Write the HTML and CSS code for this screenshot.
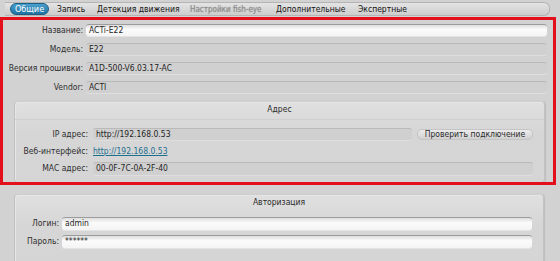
FILE: index.html
```html
<!DOCTYPE html>
<html lang="ru">
<head>
<meta charset="utf-8">
<title>Общие</title>
<link rel="stylesheet" href="styles.css">
</head>
<body>
<nav class="tabs">
  <div class="tab active">Общие</div>
  <div class="tab t-rec">Запись</div>
  <div class="tab t-motion">Детекция движения</div>
  <div class="tab t-fish disabled">Настройки fish-eye</div>
  <div class="tab t-adv">Дополнительные</div>
  <div class="tab t-exp">Экспертные</div>
</nav>
<section class="highlight">
  <div class="rows">
    <label class="lbl">Название:</label><div class="input">ACTi-E22</div>
    <label class="lbl">Модель:</label><div class="field">E22</div>
    <label class="lbl">Версия прошивки:</label><div class="field">A1D-500-V6.03.17-AC</div>
    <label class="lbl">Vendor:</label><div class="field">ACTI</div>
  </div>
  <div class="group addr">
    <div class="group-title">Адрес</div>
    <div class="addr-rows">
      <label class="lbl">IP адрес:</label>
      <div class="ip-line"><div class="field ip">http://192.168.0.53</div><button class="btn">Проверить подключение</button></div>
      <label class="lbl">Веб-интерфейс:</label><div class="link-cell"><a class="link" href="#">http://192.168.0.53</a></div>
      <label class="lbl">MAC адрес:</label><div class="field">00-0F-7C-0A-2F-40</div>
    </div>
  </div>
</section>
<section class="group auth">
  <div class="group-title">Авторизация</div>
  <div class="auth-rows">
    <label class="lbl">Логин:</label><div class="input">admin</div>
    <label class="lbl">Пароль:</label><div class="input pw">******</div>
  </div>
</section>
</body>
</html>
```
FILE: styles.css
```css
html, body {
  margin: 0;
  padding: 0;
}
body {
  width: 560px;
  height: 261px;
  overflow: hidden;
  background: #d2d2d2;
  font-family: "DejaVu Sans Condensed", "DejaVu Sans", sans-serif;
  font-size: 8.5px;
  color: #2a2a2a;
}
.tabs {
  display: flex;
  align-items: center;
  height: 12px;
  margin: 2px 10px 0 5px;
  padding-left: 5px;
  background: linear-gradient(#e4e4e4, #cdcdcd);
  border: 1px solid #b4b4b4;
  border-left: none;
  border-radius: 0 6px 6px 0;
}
.tab {
  flex: none;
  line-height: 11px;
  font-size: 8.5px;
  color: #141414;
  white-space: nowrap;
}
.tab.active {
  box-sizing: border-box;
  flex-basis: 39px;
  text-align: center;
  background: linear-gradient(#4aa0cc, #1f73a3);
  border: 1px solid #1b5e86;
  border-radius: 6px;
  color: #fff;
  line-height: 10px;
  font-size: 9px;
}
.t-rec { margin-left: 8px; flex-basis: 40px; }
.t-motion { flex-basis: 93px; }
.t-fish { flex-basis: 86px; }
.t-adv { flex-basis: 82px; }
.t-exp { flex-basis: 60px; }
.tab.disabled {
  color: #8e8e8e;
  text-shadow: 0 0 1px #9a9a9a;
  font-size: 8px;
}
.highlight {
  margin: 1px 4px 0 0;
  border: 3px solid #e3101b;
  height: 162px;
  overflow: hidden;
}
.rows {
  display: grid;
  grid-template-columns: 80px 1fr;
  grid-auto-rows: 19px;
  column-gap: 3px;
  padding-right: 6px;
  align-items: center;
}
.lbl {
  text-align: right;
  color: #2e2e2e;
  white-space: nowrap;
}
.input, .field {
  height: 12px;
  padding-left: 3px;
  border-radius: 3px;
  box-sizing: border-box;
  white-space: nowrap;
  color: #1f1f1f;
  line-height: 11px;
}
.input {
  background: linear-gradient(#dedede, #fbfbfb 40%, #f4f4f4);
  border-top: 1px solid #9c9c9c;
  box-shadow: 0 1px 0 #e4e4e4;
}
.field {
  background: #d0d0d0;
  border-top: 1px solid #b9b9b9;
  box-shadow: 0 1px 0 #dedede;
}
.group {
  background: linear-gradient(#e0e0e0, #d6d6d6 30px, #d5d5d5);
  border: 1px solid #c2c2c2;
  border-top-color: #cfcfcf;
  border-radius: 4px;
  box-shadow: 1px 1px 0 #e6e6e6 inset, 1px 0 1px #bdbdbd;
}
.addr {
  margin: 5px 8px 0 11px;
  height: 80px;
}
.group-title {
  text-align: center;
  height: 17px;
  line-height: 15px;
  color: #2a2a2a;
  border-bottom: 1px solid #d0d0d0;
}
.addr-rows {
  display: grid;
  grid-template-columns: 73px 1fr;
  grid-auto-rows: 17px;
  column-gap: 5px;
  padding: 5px 11px 0 0;
  align-items: center;
}
.ip-line {
  display: flex;
  align-items: center;
  gap: 5px;
}
.ip { flex: 1; }
.btn {
  width: 116px;
  height: 11px;
  padding: 0;
  font-family: inherit;
  font-size: 8.5px;
  line-height: 9px;
  color: #2a2a2a;
  background: linear-gradient(#ececec, #d0d0d0);
  border: 1px solid #c4c4c4;
  border-radius: 5px;
  margin-top: 2px;
}
.link-cell { line-height: 12px; }
.link {
  color: #1f6f8f;
  text-decoration: underline;
}
.addr-rows .field:last-child { height: 13px; margin-top: 2px; }
.auth {
  margin: 9px 16px 0 14px;
  height: 66px;
  border-bottom: none;
  border-radius: 4px 4px 0 0;
}
.auth .group-title { border-bottom: none; }
.auth-rows {
  display: grid;
  grid-template-columns: 44px 1fr;
  grid-auto-rows: 18px;
  column-gap: 3px;
  padding: 2px 11px 0 0;
  align-items: center;
}
.auth-rows .input { height: 13px; }
```
